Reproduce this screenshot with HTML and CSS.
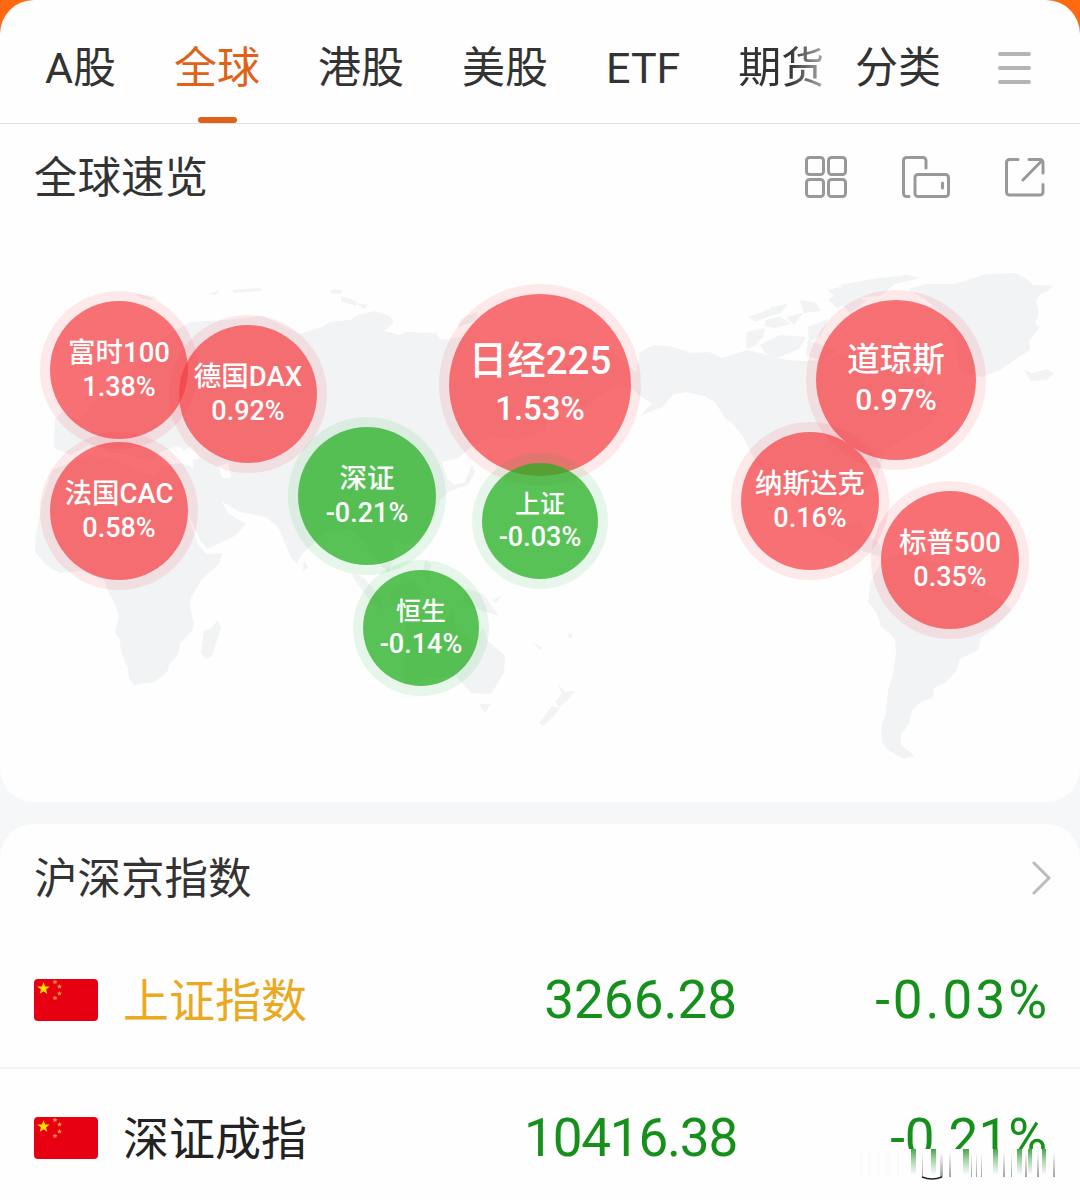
FILE: index.html
```
<!DOCTYPE html>
<html lang="zh-CN">
	<head>
		<meta charset="UTF-8">
		<title>全球</title>
		<link rel="stylesheet" href="styles.css">
	</head>
	<body>
		<div class="page">
			<div class="card top">
				<div class="nav">
					<div class="tabs">
						<span>A股</span>
						<span class="active">全球</span>
						<span>港股</span>
						<span>美股</span>
						<span>ETF</span>
						<span class="fade">期货</span>
					</div>
					<span class="sort">分类</span>
					<div class="menu"><i></i><i></i><i></i></div>
				</div>
				<div class="title">
					<h2>全球速览</h2>
					<div class="icons">
						<svg width="44" height="44" viewBox="0 0 44 44">
							<rect x="2.5" y="2.5" width="17" height="17" rx="3"/>
							<rect x="24.500" y="2.500" width="17" height="17" rx="3"/>
							<rect x="2.500" y="24.500" width="17" height="17" rx="3"/>
							<rect x="24.500" y="24.500" width="17" height="17" rx="3"/>
						</svg>
						<svg width="50" height="44" viewBox="0 0 50 44">
							<path d="M8 41.500H5.500a3 3 0 0 1-3-3V5.500a3 3 0 0 1 3-3H22a3 3 0 0 1 3 3V13"/>
							<rect x="14" y="19.500" width="33.500" height="22" rx="3"/>
							<path d="M41.500 28v5"/>
						</svg>
						<svg width="42" height="44" viewBox="0 0 42 44">
							<path d="M14 4.500H5.500a3 3 0 0 0-3 3V37a3 3 0 0 0 3 3H36a3 3 0 0 0 3-3V29.500M25 4.500H36a3 3 0 0 1 3 3V18M38 5.500L19 25"/>
						</svg>
					</div>
				</div>
				<div class="map">
					<svg class="land" width="1080" height="560" viewBox="0 230 1080 560">
						<!-- 欧亚 -->
						<path d="M55 420L62 412L80 420L96 400L120 385L150 345L190 322L225 320L262 316L272 320L300 334L322 327L330 322L350 320L358 315L375 311L390 316L394 322L384 331L400 335L406 332L436 333L441 340L470 336L500 345L560 338L610 352L637 372L632 392L620 384L600 396L582 410L574 395L550 405L545 430L520 440L490 436L470 448L458 458L442 462L447 478L455 486L440 500L434 520L420 538L404 545L392 540L396 556L388 572L376 560L366 545L350 530L332 528L315 542L301 555L297 564L291 558L284 541L278 527L266 517L240 512L221 501L229 514L246 524L235 536L207 549L200 540L188 514L178 490L150 480L162 466L180 463L194 468L191 454L178 446L160 452L150 462L130 455L110 452L90 445L70 455L54 448Z"/>
						<path class="sea" d="M181 452l10 -6l9 12l-12 4zM218 466l10 -3l3 14l-8 2z"/>
						<!-- 非洲 -->
						<path d="M52 470L90 455L115 460L150 475L180 482L186 512L198 544L206 554L222 553L219 564L201 580L191 598L190 607L194 624L192 631L180 643L178 655L170 663L167 672L155 682L134 685L129 678L128 668L121 652L120 640L115 632L119 616L116 606L108 591L104 580L82 571L60 573L46 565L35 551L36 535L42 502Z"/>
						<path d="M217 620l4 8l-9 28l-6 3l-5 -6l3 -22l8 -3z"/>
						<!-- 岛屿 -->
						<path d="M304 560l4 8l-5 3zM354 573l10 5l16 18l4 14l-12 -6l-20 -28zM390 590l22 -10l10 12l-12 22l-18 -8zM425 560l6 4l-2 16l-6 -6zM465 588l18 6l16 22l-16 -5l-20 -8zM493 600l8 -4l-5 7zM405 620l26 -10l10 12l12 -10l4 20l18 10l8 -15l5 14l17 15l-1 16l-13 22l-20 -1l-15 -17l-24 2l-28 7z"/>
						<path d="M479 704h12l-6 9zM532 641l11 8l-3 1zM568 634l4 -1v5h-3zM558 684l7 8l10 -1l-8 10l-8 6l-4 -5l7 -8zM552 706l8 2l-7 9l-10 9l-4 -3z"/>
						<path d="M333 289l11 2l-5 3l-9 -1zM341 296l15 5v5l-15 -5zM356 303l12 2l-4 4zM209 294l11 -4l-4 5zM233 290l28 -2v3l-28 2zM135 294l18 2l6 4l-16 -1zM460 319l18 -7l-5 10l-15 5zM465 482l7 -18l3 8l-7 13l-21 7l1 -5z"/>
						<!-- 北美 -->
						<path d="M640 352L654 345L669 346L691 353L709 352L722 358L747 350L768 355L786 360L804 361L830 360L846 352L868 366L890 370L920 380L940 405L930 425L905 438L885 450L878 475L864 490L848 495L838 505L842 525L860 522L866 533L880 544L884 558L865 552L840 542L818 532L800 505L785 492L764 475L752 455L744 438L734 425L724 417L715 402L704 396L686 392L674 394L662 407L640 416L652 403L638 395L630 385L637 370Z"/>
						<path d="M747 332l18 -4l-2 10l-17 5zM749 317l20 -8l4 6l-18 7zM770 307l18 -3l-8 10l-8 1zM766 320l14 -4l10 8l-14 4l-12 -2zM786 317l17 -4l-9 12zM800 300l16 3l5 8l-17 2zM828 299l13 -6l10 10l-14 5zM760 345l20 -10l26 2l-7 12l-22 9l-12 -5zM808 327l20 -8l-7 16l-12 7zM808 340l28 10l-12 12l-18 -7zM840 285l32 -6l35 -4l13 3l-25 6l-15 12l-28 2zM828 290l12 -3l26 14l-16 12l-10 -10zM746 342l14 -3l-4 6l-9 4z"/>
						<!-- 格陵兰 -->
						<path d="M908 289L926 284L955 284L974 278L985 274L1015 273L1027 279L1033 285L1054 286L1046 292L1040 294L1036 301L1039 313L1035 324L1040 327L1029 341L1030 350L1013 361L1000 370L982 377L966 374L958 365L956 340L940 312L925 299Z"/>
						<path d="M1024 370l8 3l15 -4l7 4l-7 7l-16 1z"/>
						<!-- 南美 -->
						<path d="M870 583L882 560L905 552L940 565L965 582L1000 600L1012 610L995 628L981 638L978 650L960 659L956 671L946 682L934 688L933 698L922 701L912 710L909 724L901 734L901 745L915 756L904 759L888 750L882 742L881 727L886 714L888 690L893 675L896 652L895 638L881 626L876 612L868 602Z"/>
					</svg>
					<!-- 指数气泡 -->
					<div class="bubble md up ftse"><b>富时100</b><em>1.38%</em></div>
					<div class="bubble md up dax"><b>德国DAX</b><em>0.92%</em></div>
					<div class="bubble md up cac"><b>法国CAC</b><em>0.58%</em></div>
					<div class="bubble md down sz"><b>深证</b><em>-0.21%</em></div>
					<div class="bubble xl up nikkei"><b>日经225</b><em>1.53%</em></div>
					<div class="bubble sm down sh"><b>上证</b><em>-0.03%</em></div>
					<div class="bubble sm down hs"><b>恒生</b><em>-0.14%</em></div>
					<div class="bubble lg up dow"><b>道琼斯</b><em>0.97%</em></div>
					<div class="bubble md up nasdaq"><b>纳斯达克</b><em>0.16%</em></div>
					<div class="bubble md up sp"><b>标普500</b><em>0.35%</em></div>
				</div>
			</div>
			<div class="card list">
				<div class="title">
					<h2>沪深京指数</h2>
					<svg class="more" width="22" height="34" viewBox="0 0 22 34"><path d="M3 2L18 17L3 32"/></svg>
				</div>
				<div class="row">
					<svg class="flag" width="64" height="42" viewBox="0 0 64 42">
						<rect width="64" height="42" rx="4"/>
						<path d="M9.500 3l1.600 4.500h4.700l-3.800 2.900l1.400 4.600l-3.900 -2.700l-3.900 2.700l1.400 -4.600l-3.800 -2.900h4.700z"/>
						<path class="small" d="M21 .5l.8 1.500l1.700 .2l-1.200 1.200l.3 1.700l-1.600 -.8l-1.600 .8l.3 -1.700l-1.200 -1.200l1.700 -.2zM25.500 5l.8 1.500l1.700 .2l-1.200 1.200l.3 1.700l-1.600 -.8l-1.600 .8l.3 -1.700l-1.200 -1.200l1.700 -.2zM25.500 12l.8 1.500l1.700 .2l-1.200 1.200l.3 1.700l-1.600 -.8l-1.600 .8l.3 -1.700l-1.200 -1.200l1.700 -.2zM21 16.500l.8 1.500l1.700 .2l-1.200 1.200l.3 1.700l-1.600 -.8l-1.600 .8l.3 -1.700l-1.200 -1.200l1.700 -.2z"/>
					</svg>
					<span class="name on">上证指数</span>
					<span class="price">3266.28</span>
					<span class="rate wide">-0.03%</span>
				</div>
				<div class="row">
					<svg class="flag" width="64" height="42" viewBox="0 0 64 42">
						<rect width="64" height="42" rx="4"/>
						<path d="M9.500 3l1.600 4.500h4.700l-3.800 2.900l1.400 4.600l-3.900 -2.700l-3.900 2.700l1.400 -4.600l-3.800 -2.900h4.700z"/>
						<path class="small" d="M21 .5l.8 1.500l1.700 .2l-1.200 1.200l.3 1.700l-1.600 -.8l-1.600 .8l.3 -1.700l-1.200 -1.200l1.700 -.2zM25.500 5l.8 1.500l1.700 .2l-1.200 1.200l.3 1.700l-1.600 -.8l-1.600 .8l.3 -1.700l-1.200 -1.200l1.700 -.2zM25.500 12l.8 1.500l1.700 .2l-1.200 1.200l.3 1.700l-1.600 -.8l-1.600 .8l.3 -1.700l-1.200 -1.200l1.700 -.2zM21 16.500l.8 1.500l1.700 .2l-1.200 1.200l.3 1.700l-1.600 -.8l-1.600 .8l.3 -1.700l-1.200 -1.200l1.700 -.2z"/>
					</svg>
					<span class="name">深证成指</span>
					<span class="price tight">10416.38</span>
					<span class="rate">-0.21%</span>
					<svg class="smear" width="200" height="40" viewBox="858 1147 200 40">
						<defs>
							<linearGradient id="g" x1="0" y1="0" x2="0" y2="1"><stop offset="0" stop-color="#15911b" stop-opacity=".8"/><stop offset=".4" stop-color="#15911b" stop-opacity=".4"/><stop offset="1" stop-color="#15911b" stop-opacity="0"/></linearGradient>
							<linearGradient id="k" x1="0" y1="0" x2="0" y2="1"><stop offset="0" stop-color="#444" stop-opacity="0"/><stop offset="1" stop-color="#444" stop-opacity=".5"/></linearGradient>
						</defs>
						<path fill="#fefefe" d="M858 1147h200v40h-200z"/>
						<path fill="url(#g)" d="M911 1147h5v26h-5zM931 1147h5v26h-5zM963 1147h6v26h-6zM993 1147h5v26h-5zM1017 1147h5v26h-5zM1028 1147h4v26h-4zM1042 1147h4v26h-4z"/>
						<path fill="url(#k)" d="M922 1150h1v25h-1zM940 1150h3v25h-3zM949 1150h2v25h-2zM971 1150h1v25h-1zM976 1150h1v25h-1zM981 1150h1v25h-1zM1003 1150h2v25h-2zM1011 1150h1v25h-1zM1025 1150h2v25h-2zM1037 1150h2v25h-2zM1053 1150h2v25h-2z"/>
						<path fill="none" stroke="#222" stroke-width="1.500" d="M922 1175q10 4 20 0"/>
						<path fill="#fafafa" d="M860 1149h2v26h-2zM868 1149h3v26h-3zM878 1149h2v26h-2zM886 1149h4v26h-4zM897 1149h2v26h-2z"/>
					</svg>
				</div>
			</div>
		</div>
	</body>
</html>
```
FILE: styles.css
```
*{
	margin: 0;
	padding: 0;
	box-sizing: border-box;
}
body{
	background: #f6f7f8;
	font-family: Roboto, "Noto Sans CJK SC", sans-serif;
	color: #333;
	overflow: hidden;
}
.page{
	width: 1080px;
	height: 1200px;
	overflow: hidden;
	background: linear-gradient(#ff6a10 0, #ff6a10 60px, #f6f7f8 60px);
}
.card{
	background: #fefefe;
	border-radius: 34px;
}
.top{
	height: 802px;
}
.nav{
	display: flex;
	height: 124px;
	padding: 14px 49px 0 45px;
	border-bottom: 1px solid #e0e2e2;
	font-size: 43px;
	line-height: 109px;
}
.tabs{
	display: flex;
	gap: 58px;
	width: 781px;
}
.tabs span{
	position: relative;
	white-space: nowrap;
}
.tabs .active{
	color: #e06118;
}
.tabs .active::after{
	content: "";
	position: absolute;
	left: 24px;
	bottom: 0;
	width: 39px;
	height: 6px;
	border-radius: 3px;
	background: #e06118;
}
.tabs .fade{
	background: linear-gradient(90deg, #333 60%, #aaa);
	-webkit-background-clip: text;
	background-clip: text;
	color: transparent;
}
.sort{
	margin-left: 29px;
	white-space: nowrap;
}
.menu{
	display: flex;
	flex-direction: column;
	gap: 10px;
	margin: 38px 0 0 auto;
}
.menu i{
	width: 33px;
	height: 4px;
	border-radius: 2px;
	background: #b4b4b4;
}
.title{
	display: flex;
	align-items: center;
	justify-content: space-between;
	height: 106px;
	padding: 0 34px;
}
h2{
	padding-bottom: 6px;
	font-size: 43.5px;
	font-weight: 400;
}
.icons{
	display: flex;
	gap: 53px;
}
.icons svg, .more{
	fill: none;
	stroke: #999;
	stroke-width: 3;
	stroke-linecap: round;
	stroke-linejoin: round;
}
.map{
	position: relative;
	height: 560px;
}
.land{
	display: block;
	fill: #f1f3f4;
}
.land .sea{
	fill: #fefefe;
}
.bubble{
	position: absolute;
	display: flex;
	flex-direction: column;
	align-items: center;
	justify-content: center;
	border-radius: 50%;
	color: #fff;
	white-space: nowrap;
	transform: translate(-50%, -50%);
}
.bubble b{
	font-weight: 500;
}
.bubble em{
	font-style: normal;
	font-weight: 500;
}
.up{
	background: rgba(244,64,68,.75);
	box-shadow: 0 0 0 10px rgba(250,70,90,.12);
}
.down{
	background: rgba(33,173,31,.75);
	box-shadow: 0 0 0 10px rgba(33,173,61,.1);
}
.sm{
	width: 116px;
	height: 116px;
	font-size: 25px;
	line-height: 33px;
}
.md{
	width: 138px;
	height: 138px;
	font-size: 27.5px;
	line-height: 35px;
}
.lg{
	width: 160px;
	height: 160px;
	font-size: 32.5px;
	line-height: 40px;
}
.xl{
	width: 182px;
	height: 182px;
	font-size: 38.5px;
	line-height: 48px;
}
.sm em{
	font-size: 27px;
}
.md em{
	font-size: 27px;
}
.lg em{
	font-size: 30px;
}
.xl em{
	font-size: 33px;
}
.ftse{ left: 119px; top: 140px; }
.dax{ left: 248px; top: 164px; }
.cac{ left: 119px; top: 281px; }
.sz{ left: 367px; top: 266px; }
.nikkei{ left: 540px; top: 155px; }
.sh{ left: 540px; top: 291px; }
.hs{ left: 421px; top: 398px; }
.dow{ left: 896px; top: 150px; }
.nasdaq{ left: 810px; top: 271px; }
.sp{ left: 950px; top: 330px; }
.list{
	height: 420px;
	margin-top: 22px;
}
.list .title{
	height: 108px;
	padding-right: 27px;
}
.more{
	stroke: #bbb;
}
.row{
	position: relative;
	display: grid;
	grid-template-columns: 89px 260px 354px 1fr;
	align-items: center;
	height: 135px;
	padding: 0 33px 0 34px;
}
.row + .row{
	height: 140px;
	border-top: 2px solid #f5f6f7;
}
.flag{
	fill: #e60012;
}
.flag path{
	fill: #ffde00;
}
.flag .small{
	fill: #fb8c3c;
}
.name{
	padding-bottom: 6px;
	font-size: 46px;
	color: #222;
}
.name.on{
	color: #eaa921;
}
.price, .rate{
	font-size: 53px;
	color: #15911b;
	text-align: right;
	white-space: nowrap;
}
.rate.wide{
	margin-right: -3px;
	letter-spacing: 3px;
}
.price.tight{
	letter-spacing: -1.2px;
}
.smear{
	position: absolute;
	left: 858px;
	top: 80px;
}
```
